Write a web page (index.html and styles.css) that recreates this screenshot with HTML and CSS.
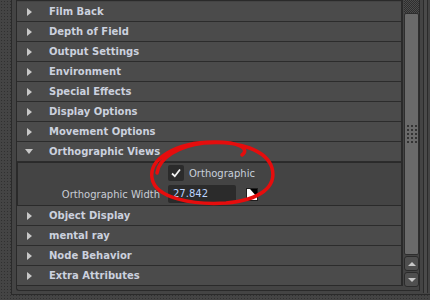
FILE: index.html
```html
<!DOCTYPE html>
<html>

<head>
    <meta http-equiv="Content-Type" content="text/html; charset=utf-8" />
    <link rel="stylesheet" href="styles.css">
</head>

<body>

    <div class="page">
        <div class="frame">
            <div class="panel">
                <div class="list">
                    <div class="row"><span class="arrow"></span><span class="title">Film Back</span></div>
                    <div class="row"><span class="arrow"></span><span class="title">Depth of Field</span></div>
                    <div class="row"><span class="arrow"></span><span class="title">Output Settings</span></div>
                    <div class="row"><span class="arrow"></span><span class="title">Environment</span></div>
                    <div class="row"><span class="arrow"></span><span class="title">Special Effects</span></div>
                    <div class="row"><span class="arrow"></span><span class="title">Display Options</span></div>
                    <div class="row"><span class="arrow"></span><span class="title">Movement Options</span></div>
                    <div class="row"><span class="arrow down"></span><span class="title">Orthographic Views</span></div>
                    <div class="section">
                        <div class="field-row">
                            <span class="label"></span>
                            <span class="check">
                                <span class="box">
                                    <svg width="16" height="16" viewBox="0 0 16 16">
                                        <path d="M4 8.5 L6.8 11.2 L12 4.5" fill="none" stroke="#f2f2f2" stroke-width="1.8" />
                                    </svg>
                                </span>
                                Orthographic
                            </span>
                        </div>
                        <div class="field-row">
                            <span class="label">Orthographic Width</span>
                            <span class="input">27.842</span>
                            <span class="map">
                                <svg width="12" height="13" viewBox="0 0 12 13">
                                    <rect x="0" y="0" width="12" height="13" fill="#ffffff" />
                                    <polygon points="4,1 11,1 11,9" fill="#000000" />
                                    <rect x="0.5" y="0.5" width="11" height="12" fill="none" stroke="#1e1e1e" />
                                </svg>
                            </span>
                        </div>
                    </div>
                    <div class="row"><span class="arrow"></span><span class="title">Object Display</span></div>
                    <div class="row"><span class="arrow"></span><span class="title">mental ray</span></div>
                    <div class="row"><span class="arrow"></span><span class="title">Node Behavior</span></div>
                    <div class="row"><span class="arrow"></span><span class="title">Extra Attributes</span></div>
                </div>
                <div class="scroll">
                    <div class="track-top"></div>
                    <div class="thumb"><div class="grip"></div></div>
                    <div class="scroll-btn"><span class="tri-up"></span></div>
                    <div class="scroll-btn"><span class="tri-down"></span></div>
                </div>
            </div>
            <div class="edge"></div>
        </div>

        <!-- red pen mark drawn over the checkbox -->
        <svg class="mark" width="430" height="300" viewBox="0 0 430 300">
            <path d="M242 155 C250 149, 240 142, 214 142 C174 142, 149 160, 152 178 C155 199, 195 205, 226 203 C260 200, 277 187, 272 168 C267 151, 240 140, 204 143 C178 146, 159 158, 157 173"
                fill="none" stroke="#e60d0d" stroke-width="3.5" stroke-linecap="round" />
        </svg>
    </div>

</body>

</html>
```

FILE: styles.css
```css
body {
    margin: 0;
    font-family: "DejaVu Sans", Verdana, sans-serif;
}

.page {
    position: relative;
    width: 430px;
    height: 300px;
    overflow: hidden;
    background-color: #444444;
    background-image: radial-gradient(circle, #303030 0.7px, transparent 1px);
    background-size: 3px 3px;
}

.frame {
    margin-left: 11px;
    height: 295px;
    box-sizing: border-box;
    background-color: #444444;
    border-left: 1px solid #2a2a2a;
    border-bottom: 1px solid #2a2a2a;
    padding: 0 0 1px 4px;
    display: flex;
}

.panel {
    display: flex;
    align-items: flex-start;
    border-left: 1px solid #2a2a2a;
    border-bottom: 1px solid #2a2a2a;
    border-bottom-left-radius: 3px;
    height: 291px;
    box-sizing: border-box;
}

.list {
    width: 384px;
    border-top: 1px solid #2a2a2a;
    border-right: 2px solid #2a2a2a;
    border-bottom: 1px solid #2a2a2a;
    padding-top: 1px;
}

.row {
    height: 19px;
    border-bottom: 1px solid #2c2c2c;
    background-color: #4b4b4b;
    display: flex;
    align-items: center;
    color: #cbd1de;
    font-size: 10px;
    font-weight: bold;
}

.row:last-child {
    border-bottom: none;
}

.arrow {
    margin-left: 10px;
    width: 0;
    height: 0;
    border-left: 5px solid #c8c8c8;
    border-top: 4px solid transparent;
    border-bottom: 4px solid transparent;
}

.arrow + .title {
    margin-left: 17px;
}

.arrow.down {
    margin-left: 8px;
    border-left: 4px solid transparent;
    border-right: 4px solid transparent;
    border-top: 5px solid #c8c8c8;
    border-bottom: none;
}

.arrow.down + .title {
    margin-left: 16px;
}

.section {
    height: 44px;
    box-sizing: border-box;
    background-color: #444444;
    border-top: 1px solid #2a2a2a;
    border-left: 1px solid #2a2a2a;
    border-bottom: 1px solid #2a2a2a;
    padding-top: 2px;
    display: grid;
    grid-template-rows: 16px 18px;
    row-gap: 4px;
}

.field-row {
    display: grid;
    grid-template-columns: 142px auto auto 1fr;
    column-gap: 8px;
    align-items: center;
    font-size: 10px;
    color: #c8ccd4;
}

.label {
    text-align: right;
}

.check {
    display: flex;
    align-items: center;
    gap: 5px;
    color: #c8d0dc;
}

.box {
    width: 16px;
    height: 16px;
    background-color: #2b2b2b;
    border-radius: 2px;
}

.box svg {
    display: block;
}

.input {
    width: 68px;
    height: 18px;
    box-sizing: border-box;
    padding-left: 5px;
    line-height: 18px;
    background-color: #2b2b2b;
    border-radius: 2px;
    color: #bcd3ff;
}

.map {
    margin-left: 2px;
    height: 13px;
}

.map svg {
    display: block;
}

.scroll {
    margin-left: 1px;
    width: 16px;
    box-sizing: border-box;
    border-right: 1px solid #2a2a2a;
    display: flex;
    flex-direction: column;
    height: 290px;
}

.track-top {
    height: 13px;
    background: conic-gradient(#2e2e2e 25%, #4c4c4c 0 50%, #2e2e2e 0 75%, #4c4c4c 0);
    background-size: 2px 2px;
}

.thumb {
    height: 242px;
    box-sizing: border-box;
    background-color: #6a6a6a;
    border: 1px solid #2e2e2e;
    border-radius: 2px;
}

.grip {
    margin: 111px 0 0 2px;
    width: 10px;
    height: 18px;
    background-image:
        linear-gradient(to bottom, transparent 2px, #6a6a6a 2px),
        linear-gradient(to right, #333333 2px, transparent 2px);
    background-size: 4px 4px;
}

.scroll-btn {
    margin-top: 1px;
    height: 15px;
    box-sizing: border-box;
    background-color: #4f4f4f;
    border: 1px solid #2b2b2b;
    border-radius: 3px;
    display: flex;
    align-items: center;
    justify-content: center;
}

.scroll-btn:first-of-type {
    margin-top: 2px;
}

.tri-up {
    width: 0;
    height: 0;
    border-left: 4px solid transparent;
    border-right: 4px solid transparent;
    border-bottom: 4px solid #c8c8c8;
}

.tri-down {
    width: 0;
    height: 0;
    border-left: 4px solid transparent;
    border-right: 4px solid transparent;
    border-top: 4px solid #c8c8c8;
}

.edge {
    flex: 1;
    background: linear-gradient(90deg, #444444 3px, #2a2a2a 3px 4px, #4a4a4a 4px 7px, #2a2a2a 7px 8px, #444444 8px);
}

.mark {
    position: absolute;
    top: 0;
    left: 0;
    pointer-events: none;
}
```
